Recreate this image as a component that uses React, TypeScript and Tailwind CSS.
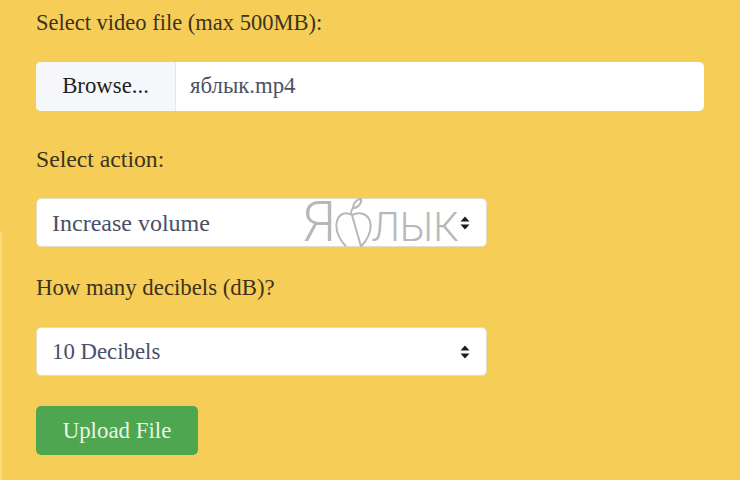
function SelectBox({ value, size }: { value: string; size: string }) {
  return (
    <div className={`flex h-[49px] w-[451px] items-center justify-between rounded-[5px] border border-[#e3dcc4] bg-white pl-[15px] pr-[16px] text-[#495067] ${size}`}>
      <span className="pt-[1px]">{value}</span>
      <svg width="10" height="14" viewBox="0 0 10 14" fill="#1c1c1c">
        <path d="M5 0.5 L9.5 5.5 H0.5 Z" />
        <path d="M5 13.5 L9.5 8.5 H0.5 Z" />
      </svg>
    </div>
  )
}

export default function App() {
  return (
    <div className="relative h-[480px] w-[740px] overflow-hidden bg-[#f6ce57] pl-[36px] pt-[9px] font-['Liberation_Serif',serif] text-[#3b3320]">
      <div className="absolute bottom-0 left-0 top-[232px] w-[2px] bg-[#fbdc80]" />

      <p className="text-[22.5px] leading-[28px]">Select video file (max 500MB):</p>

      <div className="mt-[25px] flex h-[49px] w-[668px] overflow-hidden rounded-[5px] bg-white text-[22.8px]">
        <div className="flex w-[140px] items-center justify-center border-r border-[#e4e6ea] bg-[#f5f7fa] text-[#1f1f24]">
          Browse...
        </div>
        <div className="flex items-center pl-[14px] text-[#4d5263]">яблык.mp4</div>
      </div>

      <p className="mt-[34px] text-[23.7px] leading-[28px]">Select action:</p>

      <div className="relative mt-[25px]">
        <SelectBox value="Increase volume" size="text-[24px]" />
        {/* watermark sits over the select */}
        <div className="absolute left-[266px] top-0 flex h-[49px] w-[160px] items-baseline font-['Roboto',sans-serif] font-light leading-[49px] text-[#b8b8b8]">
          <span className="text-[55px]">Я</span>
          <svg width="38" height="49" viewBox="0 0 38 49" fill="none" stroke="#b8b8b8" strokeWidth="2" className="-ml-[1px] shrink-0 self-start">
            <path d="M17 17 C10 13 2.5 16 1.5 26 C0.5 35 6 43 11 48.5 M26 48.5 C31 43 36.5 35 35.5 26 C34.5 16 25 13 17 17 Z" />
            <path d="M16 16 C16 13 17 11 18 10" />
            <path d="M18 10 C18 5 22 1 26 1 C27 5 23 10 18 10 Z" />
          </svg>
          <span className="text-[40px] -ml-[1px]">ЛЫК</span>
        </div>
      </div>

      <p className="mt-[27px] text-[22.8px] leading-[28px]">How many decibels (dB)?</p>

      <div className="mt-[25px]">
        <SelectBox value="10 Decibels" size="text-[22.8px]" />
      </div>

      <button className="mt-[30px] block h-[49px] w-[162px] rounded-[5px] bg-[#4fa651] pt-[2px] text-[22.9px] text-[#e9f7e4]">
        Upload File
      </button>
    </div>
  )
}
